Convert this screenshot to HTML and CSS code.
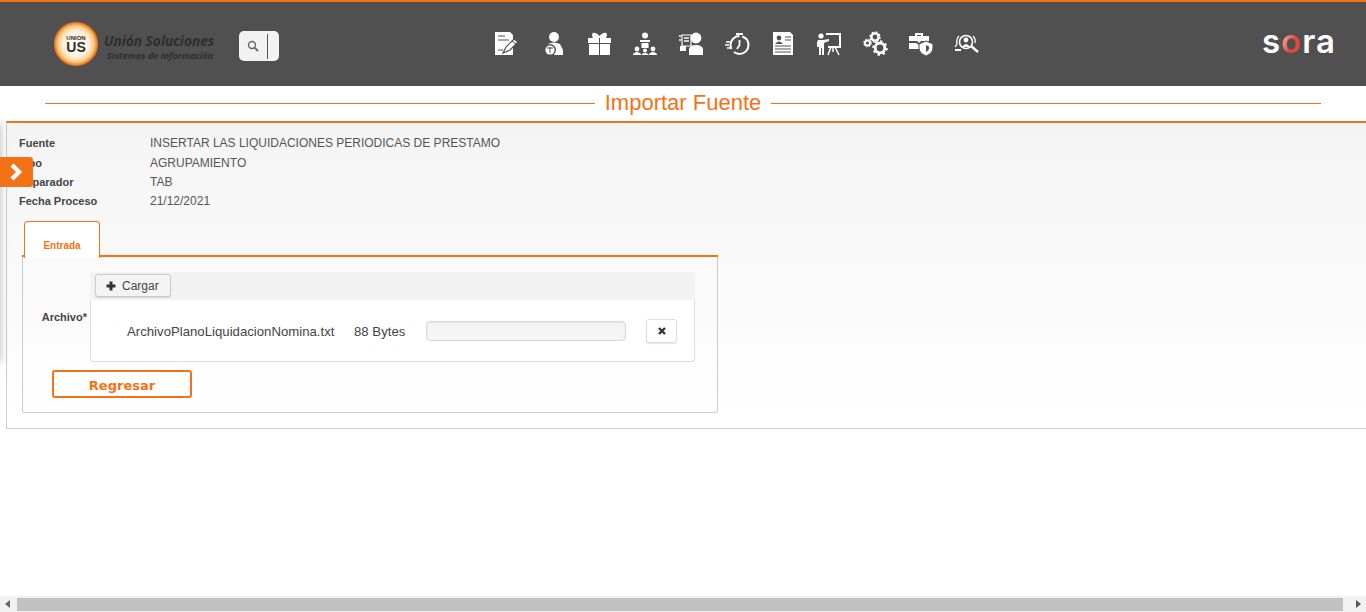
FILE: index.html
```html
<!DOCTYPE html>
<html lang="es">
<head>
    <meta charset="UTF-8">
    <title>Importar Fuente</title>
    <link rel="stylesheet" href="styles.css">
</head>
<body>
    <header class="topbar">
        <div class="brand">
            <div class="brand-badge"><div class="brand-core"><span class="brand-small">UNION</span><span class="brand-big">US</span></div></div>
            <div class="brand-text">
                <span class="brand-name">Unión Soluciones</span>
                <span class="brand-sub">Sistemas de Información</span>
            </div>
        </div>
        <div class="search">
            <svg class="search-icon" viewBox="0 0 12 12" width="12" height="12"><circle cx="5" cy="5" r="3.5" fill="none" stroke="#666" stroke-width="1.4"/><path d="M7.6 7.6L11 11" stroke="#666" stroke-width="1.8"/></svg>
            <span class="search-caret"></span>
        </div>
        <nav class="menu">
            <!-- documento con lapiz -->
            <svg class="menu-icon" viewBox="0 0 26 24"><path d="M1 0H16L19 3V23H1Z" fill="#fff"/><path d="M4 4H11M4 8H15M4 18H9" stroke="#505050" stroke-width="1.2"/><path d="M9 21L12 15L20 7L24 10L16 18Z" fill="#fff" stroke="#505050" stroke-width="1.2"/><path d="M18 9L22 12" stroke="#505050"/></svg>
            <!-- persona con globo -->
            <svg class="menu-icon" viewBox="0 0 26 24"><circle cx="14" cy="5" r="5" fill="#fff"/><path d="M8 12Q14 9 20 12L23 18V23H8Z" fill="#fff"/><circle cx="10" cy="18" r="6" fill="#505050"/><circle cx="10" cy="18" r="4.6" fill="#fff"/><path d="M7 16H13M10 15V21" stroke="#505050"/></svg>
            <!-- regalo -->
            <svg class="menu-icon" viewBox="0 0 26 24"><path d="M7 6C4 0 9 -1 13.5 4C18 -1 23 0 20 6Z" fill="#fff"/><path d="M2 6H13V11H2ZM14 6H25V11H14ZM3 12H13V23H3ZM14 12H24V23H14Z" fill="#fff"/></svg>
            <!-- jerarquia -->
            <svg class="menu-icon" viewBox="0 0 26 24"><circle cx="13" cy="3.5" r="3" fill="#fff"/><path d="M8 8H18V10H8ZM9.5 11H16.5V16H9.5Z" fill="#fff"/><circle cx="5" cy="17" r="2.4" fill="#fff"/><circle cx="13" cy="18.5" r="2" fill="#fff"/><circle cx="21" cy="17" r="2.4" fill="#fff"/><path d="M1 23V22Q5 18 9 22V23ZM9.5 23V22.5Q13 19 16.5 22.5V23ZM17 23V22Q21 18 25 22V23Z" fill="#fff"/></svg>
            <!-- persona con planilla -->
            <svg class="menu-icon" viewBox="0 0 26 24"><circle cx="18" cy="6" r="5.4" fill="#fff"/><path d="M11 23V17Q12 13 18 13Q24 13 25 17V23Z" fill="#fff"/><path d="M4 3H13V14H4Z" fill="none" stroke="#fff" stroke-width="1.2"/><path d="M1 4H3M1 8H3M6 6H11M6 9H11" stroke="#fff" stroke-width="1.3"/><path d="M2 14H8V19H2Z" fill="#fff"/></svg>
            <!-- cronometro -->
            <svg class="menu-icon" viewBox="0 0 26 24"><circle cx="15.5" cy="13" r="9" fill="none" stroke="#fff" stroke-width="2" stroke-dasharray="20 4 18 3"/><path d="M12 1H19V3H12Z" fill="#fff"/><path d="M15.5 8V13L13 17" fill="none" stroke="#fff" stroke-width="1.8"/><path d="M2 10H6M1 13H5M3 16H6" stroke="#fff" stroke-width="1.4"/></svg>
            <!-- hoja de vida -->
            <svg class="menu-icon" viewBox="0 0 26 24"><path d="M3 0H20L23 3V23H3Z" fill="#fff"/><circle cx="9" cy="6" r="2.4" fill="#505050"/><path d="M5 12Q9 7 13 12Z" fill="#505050"/><path d="M15 5H21M15 8H21M5 14H21M5 17H21M5 20H21" stroke="#505050" stroke-width="1.2"/></svg>
            <!-- presentador -->
            <svg class="menu-icon" viewBox="0 0 26 24"><circle cx="5" cy="4" r="2.6" fill="#fff"/><path d="M2 8H7L13 7V9L8 11V23H6V16H5V23H3V15H1V10Z" fill="#fff"/><path d="M10 2H24V15H12" fill="none" stroke="#fff" stroke-width="2"/><path d="M15 15L12 23M19 15L23 23M17 15V20" stroke="#fff" stroke-width="1.5"/></svg>
            <!-- engranes -->
            <svg class="menu-icon" viewBox="0 0 26 24"><g fill="none" stroke="#fff"><circle cx="13" cy="5" r="3.6" stroke-width="2.4"/><circle cx="13" cy="5" r="5.1" stroke-width="1.2" stroke-dasharray="2 2"/><circle cx="5.5" cy="11" r="2.6" stroke-width="2"/><circle cx="5.5" cy="11" r="3.9" stroke-width="1" stroke-dasharray="1.5 1.6"/><circle cx="18" cy="16" r="4.8" stroke-width="2.8"/><circle cx="18" cy="16" r="6.9" stroke-width="1.6" stroke-dasharray="2.6 2.8"/></g></svg>
            <!-- maletin con escudo -->
            <svg class="menu-icon" viewBox="0 0 26 24"><path d="M7 4V1H15V4H13V3H9V4Z" fill="#fff"/><path d="M1 4H21V9H13L11 11L9 9H1ZM1 11H8L11 13H12V17H1Z" fill="#fff"/><path d="M18 9L25 12V16Q25 21 18 24Q11 21 11 16V12Z" fill="#fff" stroke="#505050"/><path d="M18 13L21 14.5V16.5Q21 18.5 18 20Z" fill="#505050"/></svg>
            <!-- busqueda de personas -->
            <svg class="menu-icon" viewBox="0 0 26 24"><circle cx="12" cy="10" r="6.5" fill="none" stroke="#fff" stroke-width="1.6"/><circle cx="12" cy="8" r="2.4" fill="#fff"/><path d="M8 15Q12 9 16 15Z" fill="#fff"/><path d="M17 14L24 20" stroke="#fff" stroke-width="2.4"/><path d="M5 4Q2 7 3 12L1 15M19 4Q22 7 21 11" fill="none" stroke="#fff" stroke-width="1.3"/><path d="M1 18H7" stroke="#fff" stroke-width="2"/></svg>
        </nav>
        <div class="sora">s<span class="sora-red">o</span>ra</div>
    </header>

    <h1 class="page-title"><span>Importar Fuente</span></h1>

    <div class="side-shadow"></div>
    <button class="side-toggle" type="button">
        <svg viewBox="0 0 14 18" width="14" height="18"><path d="M2 2L9 9L2 16" fill="none" stroke="#fff" stroke-width="4.4"/></svg>
    </button>

    <main class="panel">
        <dl class="info">
            <dt>Fuente</dt><dd>INSERTAR LAS LIQUIDACIONES PERIODICAS DE PRESTAMO</dd>
            <dt>Tipo</dt><dd>AGRUPAMIENTO</dd>
            <dt>Separador</dt><dd>TAB</dd>
            <dt>Fecha Proceso</dt><dd>21/12/2021</dd>
        </dl>

        <div class="tabs">
            <div class="tab-strip"><a class="tab">Entrada</a></div>
            <div class="tab-body">
                <div class="form-row">
                    <label class="form-label">Archivo*</label>
                    <div class="uploader">
                        <div class="uploader-head">
                            <button class="btn-load" type="button">
                                <svg viewBox="0 0 10 10" width="10" height="10"><path d="M5 0.5V9.5M0.5 5H9.5" stroke="#333" stroke-width="3"/></svg>
                                Cargar
                            </button>
                        </div>
                        <div class="uploader-file">
                            <span class="file-name">ArchivoPlanoLiquidacionNomina.txt</span>
                            <span class="file-size">88 Bytes</span>
                            <div class="file-progress"></div>
                            <button class="btn-remove" type="button">
                                <svg viewBox="0 0 8 8" width="8" height="8"><path d="M1 1L7 7M7 1L1 7" stroke="#333" stroke-width="2.4"/></svg>
                            </button>
                        </div>
                    </div>
                </div>
                <button class="btn-back" type="button">Regresar</button>
            </div>
        </div>
    </main>

    <div class="hscroll">
        <svg viewBox="0 0 6 8" width="6" height="8"><path d="M5 0V8L0 4Z" fill="#666"/></svg>
        <div class="hscroll-thumb"></div>
        <svg class="hscroll-next" viewBox="0 0 6 8" width="6" height="8"><path d="M1 0V8L6 4Z" fill="#555"/></svg>
    </div>
</body>
</html>
```

FILE: styles.css
```css
* {
    box-sizing: border-box;
}
html, body {
    margin: 0;
    height: 612px;
    overflow: hidden;
}
body {
    display: flex;
    flex-direction: column;
    position: relative;
    font-family: "Liberation Sans", Arial, sans-serif;
    color: #555;
    background-color: #fff;
}
button {
    font-family: inherit;
    cursor: pointer;
}

/* barra superior */
.topbar {
    display: flex;
    align-items: center;
    height: 86px;
    flex-shrink: 0;
    padding-left: 54px;
    padding-right: 30px;
    background-color: #505050;
    border-top: 2px solid #f47216;
}
.brand {
    display: flex;
    align-items: center;
    width: 160px;
}
.brand-badge {
    display: flex;
    align-items: center;
    justify-content: center;
    width: 44px;
    height: 44px;
    flex-shrink: 0;
    border-radius: 50%;
    background: radial-gradient(circle, #fff 0, #fdf0d8 42%, #f8c987 58%, #f47a16 68%, #f47216 100%);
}
.brand-core {
    display: flex;
    flex-direction: column;
    align-items: center;
    color: #2e2e2e;
    font-weight: bold;
    line-height: 1;
}
.brand-small {
    font-size: 6px;
}
.brand-big {
    font-size: 14px;
    margin-top: -1px;
}
.brand-text {
    display: flex;
    flex-direction: column;
    margin-left: 6px;
    margin-top: 4px;
    font-family: "Open Sans", sans-serif;
    font-style: italic;
    font-weight: 700;
    color: #2e2e2e;
    white-space: nowrap;
}
.brand-name {
    font-size: 13.7px;
    line-height: 17px;
}
.brand-sub {
    font-size: 9.1px;
    line-height: 11px;
    margin-left: 3px;
    margin-top: 1px;
}
.search {
    display: flex;
    align-items: center;
    width: 40px;
    height: 30px;
    margin-left: 25px;
    margin-top: 4px;
    padding-left: 8px;
    border-radius: 5px;
    background-color: #f2f2f2;
}
.search-icon {
    flex-shrink: 0;
}
.search-caret {
    width: 1px;
    height: 25px;
    margin-left: 8px;
    background-color: #555;
}
.menu {
    display: flex;
    gap: 20px;
    margin-left: 215px;
}
.menu-icon {
    display: block;
    width: 26px;
    height: 24px;
    overflow: visible;
}
.sora {
    margin-left: auto;
    margin-bottom: 6px;
    font-family: "Inter", sans-serif;
    font-size: 33px;
    font-weight: 600;
    line-height: 1;
    letter-spacing: 1px;
    color: #fff;
}
.sora-red {
    color: transparent;
    background: linear-gradient(115deg, #f3c6bd 15%, #e0483a 55%);
    -webkit-background-clip: text;
    background-clip: text;
}

/* titulo */
.page-title {
    display: flex;
    align-items: center;
    height: 35px;
    flex-shrink: 0;
    margin: 0;
    padding: 0 45px;
    gap: 10px;
    font-size: 22px;
    font-weight: normal;
    color: #f47216;
}
.page-title span {
    margin-bottom: 2px;
}
.page-title::before, .page-title::after {
    content: "";
    flex: 1;
    height: 1px;
    background-color: #f47216;
}

/* panel lateral oculto */
.side-shadow {
    position: absolute;
    left: -12px;
    top: 122px;
    width: 12px;
    height: 242px;
    border-radius: 6px;
    box-shadow: 0 0 8px rgba(0, 0, 0, 0.3);
}
.side-toggle {
    position: absolute;
    left: 0;
    top: 157px;
    display: flex;
    align-items: center;
    justify-content: center;
    width: 33px;
    height: 30px;
    padding: 0;
    border: none;
    border-radius: 0 3px 3px 0;
    background-color: #f47216;
}

/* contenido */
.panel {
    height: 308px;
    flex-shrink: 0;
    margin-left: 6px;
    padding: 11px 0 15px 15px;
    border-top: 2px solid #f47216;
    border-left: 1px solid #ccc;
    border-bottom: 1px solid #ccc;
    background: linear-gradient(#f4f4f4, #fff);
}
.info {
    display: grid;
    grid-template-columns: 128px 1fr;
    grid-auto-rows: 19px;
    align-items: center;
    margin: 0;
    font-size: 12px;
}
.info dt {
    margin-left: -3px;
    font-size: 11px;
    font-weight: bold;
    color: #444;
}
.info dd {
    margin: 0;
}
.info dt:first-of-type, .info dd:first-of-type {
    margin-bottom: 2px;
}
.tabs {
    width: 696px;
    margin-top: 11px;
}
.tab-strip {
    display: flex;
    height: 36px;
    padding-left: 2px;
    border-bottom: 2px solid #f47216;
}
.tab {
    display: flex;
    align-items: center;
    justify-content: center;
    width: 76px;
    height: 37px;
    padding-top: 11px;
    border: 1px solid #f47216;
    border-bottom: none;
    border-radius: 4px 4px 0 0;
    background-color: #fff;
    font-size: 10px;
    font-weight: bold;
    color: #f47216;
}
.tab-body {
    height: 156px;
    padding: 15px 22px 0 0;
    border: 1px solid #ccc;
    border-top: none;
    border-radius: 0 0 3px 3px;
}
.form-row {
    display: flex;
    align-items: center;
}
.form-label {
    width: 67px;
    padding-right: 3px;
    text-align: right;
    font-size: 11px;
    font-weight: bold;
    color: #444;
}
.uploader {
    width: 605px;
}
.uploader-head {
    height: 28px;
    padding: 2px 5px;
    border-radius: 3px 3px 0 0;
    background-color: #f2f2f2;
}
.btn-load {
    display: flex;
    align-items: center;
    gap: 6px;
    width: 76px;
    height: 23px;
    padding: 0 0 0 10px;
    border: 1px solid #ccc;
    border-radius: 3px;
    background-color: #f4f4f4;
    box-shadow: 0 1px 1px rgba(0, 0, 0, 0.12);
    font-size: 12px;
    color: #444;
}
.uploader-file {
    display: flex;
    align-items: center;
    height: 62px;
    padding-left: 36px;
    border: 1px solid #ddd;
    border-top: none;
    border-radius: 0 0 3px 3px;
    background-color: #fff;
    font-size: 13.2px;
    color: #444;
}
.file-name {
    width: 227px;
    padding-top: 2px;
}
.file-size {
    width: 72px;
    padding-top: 2px;
}
.file-progress {
    width: 200px;
    height: 20px;
    border: 1px solid #d8d8d8;
    border-radius: 4px;
    background-color: #f5f5f5;
    box-shadow: inset 0 1px 2px rgba(0, 0, 0, 0.08);
}
.btn-remove {
    display: flex;
    align-items: center;
    justify-content: center;
    width: 31px;
    height: 24px;
    margin-left: 20px;
    padding: 0;
    border: 1px solid #ddd;
    border-radius: 3px;
    background-color: #fff;
    box-shadow: 0 1px 1px rgba(0, 0, 0, 0.1);
}
.btn-back {
    display: block;
    width: 140px;
    height: 28px;
    margin: 8px 0 0 29px;
    padding: 2px 0 0;
    border: 2px solid #f47216;
    border-radius: 3px;
    background-color: #fff;
    font-family: "DejaVu Sans", sans-serif;
    font-size: 13px;
    font-weight: bold;
    color: #f47216;
}

/* barra horizontal */
.hscroll {
    display: flex;
    align-items: center;
    height: 16px;
    margin-top: auto;
    padding: 0 5px;
    background-color: #f1f1f1;
}
.hscroll-thumb {
    width: 1326px;
    height: 13px;
    margin-left: 6px;
    background-color: #c1c1c1;
}
.hscroll-next {
    margin-left: auto;
}
```
